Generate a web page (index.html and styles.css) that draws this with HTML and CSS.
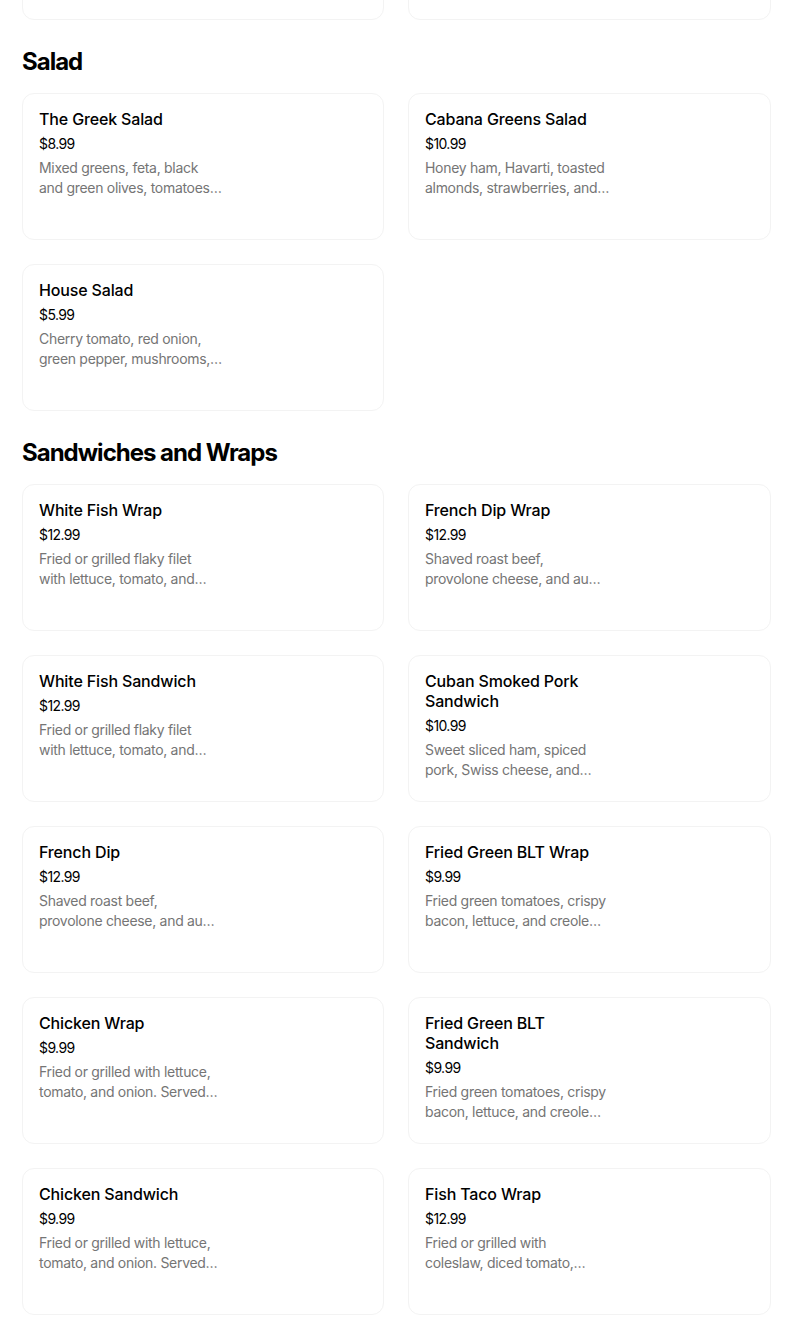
FILE: index.html
```html
<!DOCTYPE html>
<html lang="en">
<head>
<meta charset="utf-8">
<title>Menu</title>
<link rel="stylesheet" href="styles.css">
</head>
<body>
<main class="menu">
  <section class="section">
    <div class="grid">
      <article class="card"><div class="info"></div></article>
      <article class="card"><div class="info"></div></article>
    </div>
  </section>

  <section class="section">
    <h2 class="section-title">Salad</h2>
    <div class="grid">
      <article class="card"><div class="info">
        <h3 class="name">The Greek Salad</h3>
        <div class="price">$8.99</div>
        <p class="desc"><span class="line">Mixed greens, feta, black</span><span class="line">and green olives, tomatoes…</span></p>
      </div></article>
      <article class="card"><div class="info">
        <h3 class="name">Cabana Greens Salad</h3>
        <div class="price">$10.99</div>
        <p class="desc"><span class="line">Honey ham, Havarti, toasted</span><span class="line">almonds, strawberries, and…</span></p>
      </div></article>
      <article class="card"><div class="info">
        <h3 class="name">House Salad</h3>
        <div class="price">$5.99</div>
        <p class="desc"><span class="line">Cherry tomato, red onion,</span><span class="line">green pepper, mushrooms,…</span></p>
      </div></article>
    </div>
  </section>

  <section class="section">
    <h2 class="section-title">Sandwiches and Wraps</h2>
    <div class="grid">
      <article class="card"><div class="info">
        <h3 class="name">White Fish Wrap</h3>
        <div class="price">$12.99</div>
        <p class="desc"><span class="line">Fried or grilled flaky filet</span><span class="line">with lettuce, tomato, and…</span></p>
      </div></article>
      <article class="card"><div class="info">
        <h3 class="name">French Dip Wrap</h3>
        <div class="price">$12.99</div>
        <p class="desc"><span class="line">Shaved roast beef,</span><span class="line">provolone cheese, and au…</span></p>
      </div></article>
      <article class="card"><div class="info">
        <h3 class="name">White Fish Sandwich</h3>
        <div class="price">$12.99</div>
        <p class="desc"><span class="line">Fried or grilled flaky filet</span><span class="line">with lettuce, tomato, and…</span></p>
      </div></article>
      <article class="card"><div class="info">
        <h3 class="name">Cuban Smoked Pork Sandwich</h3>
        <div class="price">$10.99</div>
        <p class="desc"><span class="line">Sweet sliced ham, spiced</span><span class="line">pork, Swiss cheese, and…</span></p>
      </div></article>
      <article class="card"><div class="info">
        <h3 class="name">French Dip</h3>
        <div class="price">$12.99</div>
        <p class="desc"><span class="line">Shaved roast beef,</span><span class="line">provolone cheese, and au…</span></p>
      </div></article>
      <article class="card"><div class="info">
        <h3 class="name">Fried Green BLT Wrap</h3>
        <div class="price">$9.99</div>
        <p class="desc"><span class="line">Fried green tomatoes, crispy</span><span class="line">bacon, lettuce, and creole…</span></p>
      </div></article>
      <article class="card"><div class="info">
        <h3 class="name">Chicken Wrap</h3>
        <div class="price">$9.99</div>
        <p class="desc"><span class="line">Fried or grilled with lettuce,</span><span class="line">tomato, and onion. Served…</span></p>
      </div></article>
      <article class="card"><div class="info">
        <h3 class="name">Fried Green BLT Sandwich</h3>
        <div class="price">$9.99</div>
        <p class="desc"><span class="line">Fried green tomatoes, crispy</span><span class="line">bacon, lettuce, and creole…</span></p>
      </div></article>
      <article class="card"><div class="info">
        <h3 class="name">Chicken Sandwich</h3>
        <div class="price">$9.99</div>
        <p class="desc"><span class="line">Fried or grilled with lettuce,</span><span class="line">tomato, and onion. Served…</span></p>
      </div></article>
      <article class="card"><div class="info">
        <h3 class="name">Fish Taco Wrap</h3>
        <div class="price">$12.99</div>
        <p class="desc"><span class="line">Fried or grilled with</span><span class="line">coleslaw, diced tomato,…</span></p>
      </div></article>
    </div>
  </section>
</main>
</body>
</html>
```

FILE: styles.css
```css
* { box-sizing: border-box; }

html, body {
  margin: 0;
  padding: 0;
  background: #ffffff;
}

body {
  font-family: "Inter", "Roboto", "Liberation Sans", sans-serif;
  color: #000000;
  overflow: hidden;
}

.menu {
  padding: 0 33px 0 22px;
  margin-top: -127px;
}

.section-title {
  margin: 26px 0 15px;
  font-size: 24px;
  line-height: 32px;
  font-weight: 700;
  letter-spacing: -1px;
}

.grid {
  display: grid;
  grid-template-columns: 362px 363px;
  gap: 24px;
}

.card {
  height: 147px;
  border: 1px solid #f3f3f3;
  border-radius: 12px;
  padding: 15px 16px 16px;
  background: #fff;
}

.info {
  width: 192px;
}

.name {
  margin: 0;
  font-size: 16px;
  line-height: 20px;
  font-weight: 500;
  letter-spacing: -0.15px;
  color: #000;
}

.price {
  margin-top: 5px;
  font-size: 14px;
  line-height: 20px;
  font-weight: 400;
  letter-spacing: -0.6px;
  color: #000;
}

.desc {
  margin: 4px 0 0;
  font-size: 14px;
  line-height: 20px;
  letter-spacing: -0.3px;
  color: #757575;
}

.line {
  display: block;
  white-space: nowrap;
}
```
